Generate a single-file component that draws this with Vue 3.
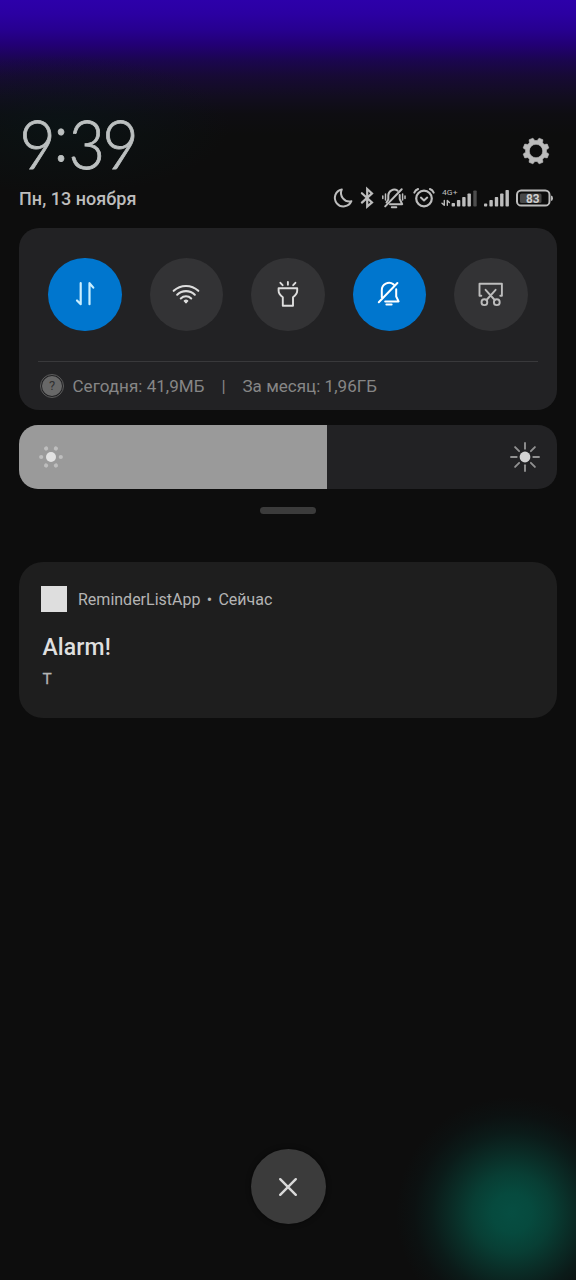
<script setup>
const gearPath = (() => {
  const points = []
  for (let i = 0; i < 8; i++) {
    const mid = 22.5 + i * 45
    for (const [offset, radius] of [[-16, 10.5], [-9, 13.2], [9, 13.2], [16, 10.5]]) {
      const a = ((mid + offset) * Math.PI) / 180
      points.push(`${(radius * Math.cos(a)).toFixed(2)} ${(radius * Math.sin(a)).toFixed(2)}`)
    }
  }
  return `M${points.join('L')}Z M6.7 0A6.7 6.7 0 1 0 -6.7 0A6.7 6.7 0 1 0 6.7 0Z`
})()

const tiles = [
  { name: 'data', active: true },
  { name: 'wifi', active: false },
  { name: 'torch', active: false },
  { name: 'mute', active: true },
  { name: 'screenshot', active: false },
]
const brightness = 57.3
const rays = [0, 45, 90, 135, 180, 225, 270, 315]
const dots = [0, 60, 120, 180, 240, 300]
</script>

<template>
  <main class="shade">
    <header class="header">
      <div class="top-row">
        <svg class="clock" viewBox="19 88 131 116"><text transform="scale(.94 1)" x="20.4 56.9 72.9 108.7" y="169 161 169 169">9:39</text></svg>
        <svg class="gear" viewBox="-14 -14 28 28"><path :d="gearPath" fill="#bcbcbc" fill-rule="evenodd" stroke="#bcbcbc" stroke-width=".6" stroke-linejoin="round" /></svg>
      </div>
      <div class="status-row">
        <span class="date">Пн, 13 ноября</span>
        <svg class="status" viewBox="330 184 226 28" fill="none" stroke="#bdbdbd" stroke-width="2" stroke-linecap="round" stroke-linejoin="round">
          <path d="M341.8 189.4A8.6 8.6 0 1 0 351.4 201.2A8.5 8.5 0 0 1 341.8 189.4Z" />
          <path d="M361.9 193.2L372 202.4L367.2 206.6V189L372 193.4L361.9 202.6" stroke-linejoin="miter" stroke-width="2.2" />
          <g>
            <path d="M386.5 202.5L388.3 199.5V195.5A6 6 0 0 1 397.5 190.6M399.7 195V199L402.2 204.2H390" />
            <path d="M385.2 206.4L401.7 189.2" />
            <path d="M391.8 207.2H396.3" />
            <path d="M385.5 194V200M402.6 194V200M382.8 196V198.4M405 196V198.4" stroke-width="1.5" />
          </g>
          <circle cx="424" cy="198.5" r="7.8" stroke-width="2.2" />
          <path d="M420.9 197.6L424 200.4L427.2 197.6M414.3 192.6Q415.4 190 418.1 189M433.7 192.6Q432.6 190 429.9 189" />
          <g stroke="none" fill="#bdbdbd">
            <text x="442" y="195.2" font-size="8" textLength="15.5" lengthAdjust="spacingAndGlyphs">4G+</text>
            <rect x="451.6" y="203" width="3.4" height="3.5" rx=".8" />
            <rect x="456.9" y="200" width="3.4" height="6.5" rx=".8" />
            <rect x="462.2" y="197" width="3.4" height="9.5" rx=".8" />
            <rect x="467.5" y="193.5" width="3.4" height="13" rx=".8" />
            <rect x="473.3" y="190.5" width="3.4" height="16" rx=".8" fill="#4d4d4d" />
            <rect x="484" y="203.5" width="3.2" height="3" rx=".8" />
            <rect x="489.4" y="200" width="3.4" height="6.5" rx=".8" />
            <rect x="494.8" y="197" width="3.4" height="9.5" rx=".8" />
            <rect x="500.1" y="193.5" width="3.4" height="13" rx=".8" />
            <rect x="505.5" y="190" width="3.4" height="16.5" rx=".8" />
            <rect x="520" y="193.5" width="21.5" height="9.5" rx="1.5" fill="#484848" />
            <text class="battery-value" x="526" y="202.8" font-size="12.5" textLength="13.5" lengthAdjust="spacingAndGlyphs">83</text>
            <path d="M551 195.5Q553 195.7 553 198.2T551 201Z" />
          </g>
          <path d="M444.3 200.5V205.3L442 203.2M447.3 205.3V200.5L449.4 202.6" stroke-width="1.4" />
          <rect x="517" y="190.6" width="32.5" height="15" rx="4.2" />
        </svg>
      </div>
    </header>

    <section class="card controls">
      <div class="tiles">
        <button v-for="tile in tiles" :key="tile.name" class="tile" :class="{ active: tile.active }">
          <svg viewBox="-20 -20 40 40" fill="none" stroke="#dedede" stroke-width="1.9" stroke-linecap="round" stroke-linejoin="round">
            <g v-if="tile.name === 'data'" stroke="#c9eeff" stroke-width="2.2">
              <path d="M-4.3 -10.8V10.2L-8 6.5M4.5 10.2V-10.8L8.3 -6.4" />
            </g>
            <g v-else-if="tile.name === 'wifi'" stroke-width="2.1">
              <path d="M-12.3 -3.2A18 18 0 0 1 12.3 -3.2M-8.8 .7A12.5 12.5 0 0 1 8.8 .7M-5.2 4.4A7.5 7.5 0 0 1 5.2 4.4" />
              <path d="M-1.8 6.9Q0 5.3 1.8 6.9L0 8.8Z" fill="#dedede" stroke-width="1.2" />
            </g>
            <g v-else-if="tile.name === 'torch'">
              <path d="M-9.4 -5.8H9.2V-3.2Q9.2 .2 5 3.2V11.7H-5.2V3.2Q-9.4 .2 -9.4 -3.2ZM-.1 -12.1V-9.2M-7.6 -11.2L-5.4 -8.8M7.4 -11.2L5.2 -8.8" />
            </g>
            <g v-else-if="tile.name === 'mute'" stroke="#fff" stroke-width="2">
              <path d="M-7.2 3.3V-3.7A7.3 7.3 0 0 1 4.5 -9.6M7.2 -4.7V2.5L9.6 7.4H-3.8M-10.2 8.2L8.4 -11" />
              <path d="M-2.6 10.6H2.6" />
            </g>
            <g v-else stroke="#bdbdbd">
              <path d="M-9.7 1.7H-11.5V-10.2H10.9V1.7H9.3M-5.4 -4.2L3.7 6M4.6 -4.2L-4.5 6" />
              <circle cx="-6.6" cy="8.2" r="2.9" /><circle cx="5.8" cy="8.2" r="2.9" />
            </g>
          </svg>
        </button>
      </div>
      <div class="usage">
        <span class="help"><span>?</span></span>
        <span class="today">Сегодня: 41,9МБ</span>
        <span class="bar">|</span>
        <span class="month">За месяц: 1,96ГБ</span>
      </div>
    </section>

    <section class="brightness">
      <div class="level" :style="{ width: brightness + '%' }">
        <svg class="dim-icon" viewBox="-15 -15 30 30">
          <circle r="5" fill="#e2e2e2" />
          <circle v-for="a in dots" :key="a" cx="9.8" r="2.1" fill="#bebebe" :transform="`rotate(${a})`" />
        </svg>
      </div>
      <svg class="sun-icon" viewBox="-15 -15 30 30">
        <circle r="5.4" fill="#d2d2d2" />
        <path v-for="a in rays" :key="a" d="M8.3 0H14" stroke="#919191" stroke-width="1.9" stroke-linecap="round" :transform="`rotate(${a})`" />
      </svg>
    </section>
    <div class="handle"></div>

    <article class="card notification">
      <div class="app-line">
        <span class="app-icon"></span>
        <span class="app-name">ReminderListApp</span><span class="bullet">•</span><span class="when">Сейчас</span>
      </div>
      <h2>Alarm!</h2>
      <p>Т</p>
    </article>

    <button class="clear">
      <svg viewBox="-10 -10 20 20"><path d="M-7.8 -7.8L7.8 7.8M7.8 -7.8L-7.8 7.8" fill="none" stroke="#dadada" stroke-width="2.4" stroke-linecap="round" /></svg>
    </button>
  </main>
</template>

<style>
body { background: #0d0d0d; }
</style>

<style scoped>
* { box-sizing: border-box; }
.shade {
  height: 1280px;
  padding: 0 19px 56px;
  display: flex;
  flex-direction: column;
  overflow: hidden;
  font-family: Roboto, "Noto Sans", sans-serif;
  background:
    radial-gradient(circle at 512px 1213px, #064e42 0, #064a3e 20px, #083e34 40px, #0a2c26 60px, #0b1b19 80px, #0c1111 98px, #0d0d0d00 116px),
    radial-gradient(ellipse 170px 70px at 60px 125px, #09181a88 0, #09181a00 100%),
    linear-gradient(#2d00aa 0, #2b00a2 14px, #270090 30px, #220074 45px, #1b0650 60px, #170a35 76px, #120d20 96px, #0e0d12 114px, #0d0d0d 135px);
}
button { border: 0; padding: 0; display: flex; align-items: center; justify-content: center; }
svg { display: block; flex: none; }
.header { height: 228px; padding-top: 108px; flex: none; }
.top-row { height: 76px; display: flex; justify-content: space-between; }
.clock { width: 131px; height: 116px; margin: -20px 0; font: 300 67px Lato, sans-serif; fill: #bcc0c0; stroke: #bcc0c0; stroke-width: .8px; }
.gear { width: 28px; height: 28px; margin: 29px 7px 0 0; }
.status-row { height: 28px; display: flex; justify-content: space-between; }
.date { font-size: 18px; line-height: 29px; font-weight: 500; color: #bdbdbd; white-space: nowrap; letter-spacing: .04px; }
.status { width: 226px; height: 28px; margin-right: 1px; }
.battery-value { font-weight: 700; fill: #d0d0d0; }
.card { flex: none; }
.controls { height: 182px; border-radius: 20px; background: #222224; padding: 29px 19px 0; }
.tiles { height: 105px; display: flex; justify-content: space-between; padding: .5px 10.5px 0 10px; border-bottom: 1px solid #39393b; }
.tile { width: 73.5px; height: 73.5px; border-radius: 50%; background: #333335; }
.tile.active { background: #0076ce; }
.tile svg { width: 40px; height: 40px; }
.usage { height: 48px; display: flex; align-items: center; font-size: 17px; color: #868686; white-space: nowrap; padding-left: 2px; letter-spacing: .03px; }
.help { width: 24px; height: 24px; border-radius: 50%; border: 1.5px solid #5c5c5c; padding: 1px; margin: -1px 8.5px 0 0; }
.help span { display: block; height: 20px; border-radius: 50%; background: #686868; color: #303030; font-size: 13px; line-height: 20px; text-align: center; }
.today { width: 149px; }
.bar { width: 21px; }
.brightness { height: 64px; margin-top: 15px; border-radius: 19px; background: #222224; overflow: hidden; display: flex; align-items: center; justify-content: space-between; flex: none; }
.level { height: 64px; display: flex; align-items: center; background: #9a9a9a; }
.dim-icon { width: 30px; height: 30px; margin-left: 17px; }
.sun-icon { width: 30px; height: 30px; margin-right: 17px; }
.handle { width: 56px; height: 7px; border-radius: 4px; background: #3b3b3b; margin: 18px auto 0; flex: none; }
.notification { height: 156px; margin-top: 48px; border-radius: 24px; background: #1e1e1e; padding: 24px 21.5px; }
.app-line { display: flex; align-items: center; height: 27px; font-size: 16px; color: #b4b4b4; }
.app-icon { width: 26.5px; height: 26.5px; background: #dedede; margin: -1px 11px 0 0; }
.bullet { width: 18px; text-align: center; }
h2 { margin: 21px 0 0 2px; font-size: 23px; line-height: 28px; font-weight: 500; color: #dfdfdf; letter-spacing: .1px; }
p { margin: 7px 0 0 2px; font-size: 15.5px; line-height: 20px; color: #b4b4b4; -webkit-text-stroke: .3px #b4b4b4; }
.clear { width: 75px; height: 75px; border-radius: 50%; background: #3b3b3b; margin: auto auto 0; flex: none; box-shadow: 0 0 5px #0008; }
.clear svg { width: 20px; height: 20px; }
</style>
